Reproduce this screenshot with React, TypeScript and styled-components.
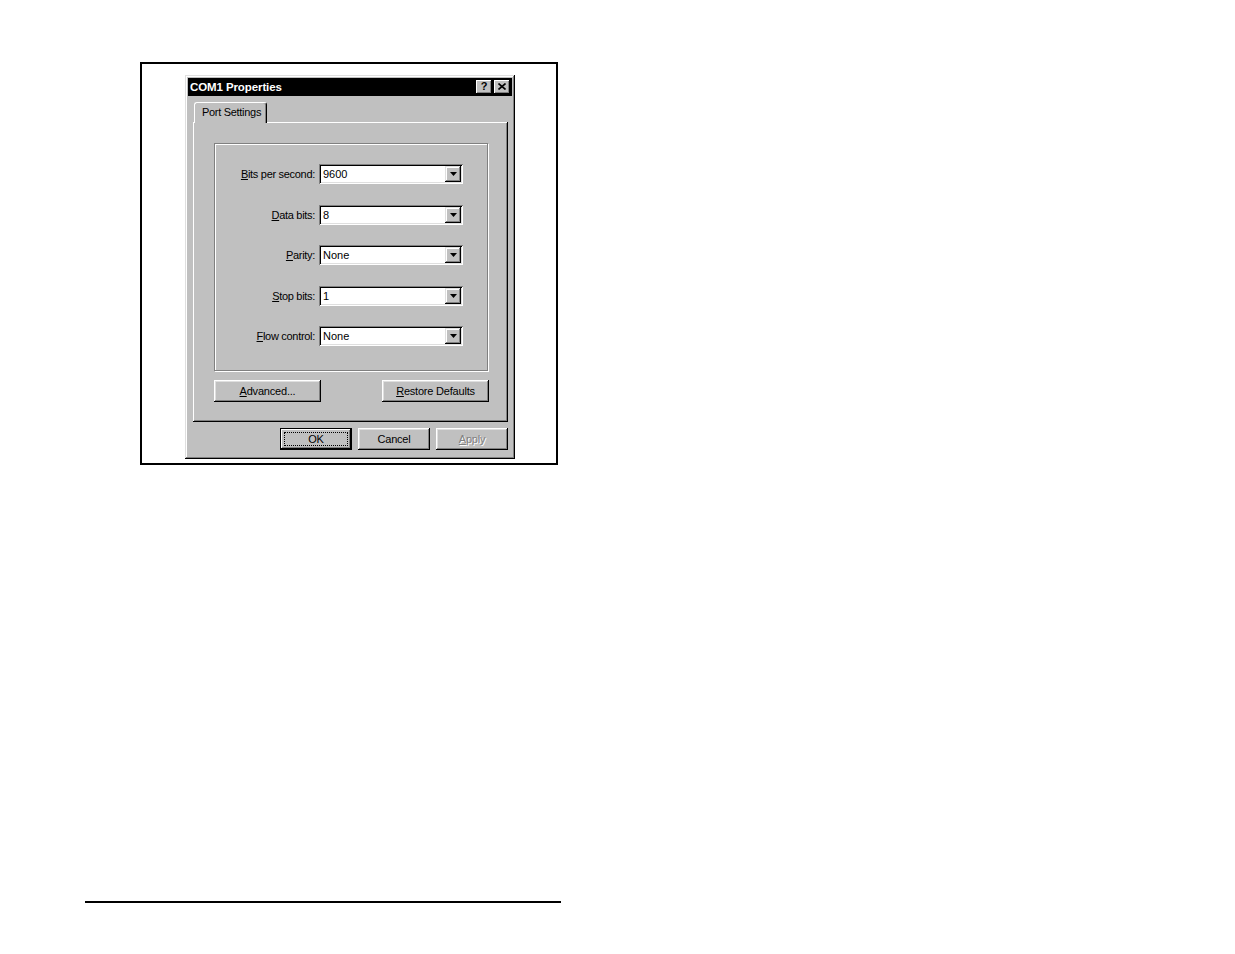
import React from "react";
import styled, { createGlobalStyle } from "styled-components";

const Global = createGlobalStyle`
  html, body { margin: 0; padding: 0; background: #fff; }
  body { font-family: "Liberation Sans", Arial, sans-serif; }
`;

const Page = styled.div`
  width: 1235px;
  height: 954px;
  padding-top: 62px;
  box-sizing: border-box;
  display: flex;
  flex-direction: column;
`;

const Frame = styled.div`
  margin-left: 140px;
  width: 418px;
  height: 403px;
  box-sizing: border-box;
  border: 2px solid #000;
  padding: 11px 0 0 43px;
`;

const Dialog = styled.div`
  width: 330px;
  height: 384px;
  box-sizing: border-box;
  background: #c0c0c0;
  padding: 3px;
  box-shadow: inset -1px -1px #000, inset 1px 1px #dfdfdf, inset -2px -2px #808080, inset 2px 2px #fff;
  display: flex;
  flex-direction: column;
  font-size: 11px;
  color: #000;
`;

const TitleBar = styled.div`
  height: 18px;
  background: #000;
  display: flex;
  align-items: center;
  justify-content: space-between;
  padding: 0 2px 1px 2px;
  box-sizing: border-box;
`;

const TitleText = styled.span`
  color: #fff;
  font-weight: bold;
  font-size: 11.5px;
  letter-spacing: -0.1px;
`;

const TitleButtons = styled.div`
  display: flex;
  gap: 2px;
`;

const CapButton = styled.div`
  width: 16px;
  height: 14px;
  background: #c0c0c0;
  box-shadow: inset -1px -1px #000, inset 1px 1px #fff, inset -2px -2px #808080;
  display: flex;
  align-items: center;
  justify-content: center;
  font-weight: bold;
  font-size: 11px;
  line-height: 1;
`;

const Body = styled.div`
  padding: 6px 4px 0 5px;
  display: flex;
  flex-direction: column;
`;

const TabStrip = styled.div`
  display: flex;
  height: 20px;
  align-items: flex-end;
  position: relative;
  z-index: 1;
`;

const Tab = styled.div`
  margin-left: 1px;
  height: 21px;
  box-sizing: border-box;
  padding: 3px 5px 0 7px;
  background: #c0c0c0;
  border-top: 1px solid #fff;
  border-left: 1px solid #fff;
  border-right: 1px solid #000;
  box-shadow: inset -1px 0 #808080;
  border-radius: 3px 3px 0 0;
  margin-bottom: -1px;
  letter-spacing: -0.3px;
`;

const Panel = styled.div`
  height: 300px;
  box-sizing: border-box;
  padding: 21px 20px 0 21px;
  box-shadow: inset -1px -1px #000, inset 1px 1px #fff, inset -2px -2px #808080;
  display: flex;
  flex-direction: column;
`;

const Group = styled.div`
  height: 228px;
  box-sizing: border-box;
  border: 1px solid #808080;
  box-shadow: inset 1px 1px #fff, 1px 1px #fff;
  padding: 20px 0 0 1px;
  display: grid;
  grid-template-columns: 99px 144px;
  column-gap: 4px;
  row-gap: 20.5px;
  align-content: start;
`;

const Label = styled.label`
  text-align: right;
  align-self: center;
  white-space: nowrap;
  letter-spacing: -0.3px;
`;

const U = styled.span`
  text-decoration: underline;
  text-underline-offset: 1px;
`;

const Combo = styled.div`
  height: 20px;
  box-sizing: border-box;
  background: #fff;
  box-shadow: inset 1px 1px #808080, inset -1px -1px #fff, inset 2px 2px #000, inset -2px -2px #dfdfdf;
  display: flex;
  align-items: center;
  padding: 2px;
`;

const ComboValue = styled.span`
  flex: 1;
  padding-left: 2px;
`;

const DropBtn = styled.div`
  width: 16px;
  height: 16px;
  box-sizing: border-box;
  background: #c0c0c0;
  box-shadow: inset -1px -1px #000, inset 1px 1px #dfdfdf, inset -2px -2px #808080, inset 2px 2px #fff;
  display: flex;
  align-items: center;
  justify-content: center;
`;

const ButtonRow = styled.div`
  display: flex;
  justify-content: space-between;
  margin-top: 9px;
  margin-right: -1px;
`;

const Button = styled.div<{ $w: number; $default?: boolean; $disabled?: boolean }>`
  width: ${(p) => p.$w}px;
  height: 22px;
  box-sizing: border-box;
  background: #c0c0c0;
  display: flex;
  align-items: center;
  justify-content: center;
  letter-spacing: -0.2px;
  position: relative;
  color: ${(p) => (p.$disabled ? "#808080" : "#000")};
  text-shadow: ${(p) => (p.$disabled ? "1px 1px #fff" : "none")};
  box-shadow: ${(p) =>
    p.$default
      ? "inset 0 0 0 1px #000, inset -2px -2px #000, inset 2px 2px #fff, inset -3px -3px #808080"
      : "inset -1px -1px #000, inset 1px 1px #fff, inset -2px -2px #808080, inset 2px 2px #dfdfdf"};
`;

const Focus = styled.span`
  position: absolute;
  inset: 4px;
  border: 1px dotted #000;
`;

const Footer = styled.div`
  display: flex;
  justify-content: flex-end;
  gap: 6px;
  margin-top: 6px;
`;

const Rule = styled.div`
  margin-top: 436px;
  margin-left: 85px;
  width: 476px;
  height: 2px;
  background: #000;
`;

const Arrow = () => (
  <svg width="7" height="4" viewBox="0 0 7 4">
    <path d="M0 0h7L3.5 4z" fill="#000" />
  </svg>
);

const rows: { u: string; post: string; value: string }[] = [
  { u: "B", post: "its per second:", value: "9600" },
  { u: "D", post: "ata bits:", value: "8" },
  { u: "P", post: "arity:", value: "None" },
  { u: "S", post: "top bits:", value: "1" },
  { u: "F", post: "low control:", value: "None" },
];

export default function App() {
  return (
    <>
      <Global />
      <Page>
        <Frame>
          <Dialog>
            <TitleBar>
              <TitleText>COM1 Properties</TitleText>
              <TitleButtons>
                <CapButton>?</CapButton>
                <CapButton>
                  <svg width="8" height="7" viewBox="0 0 8 7">
                    <path d="M0.5 0.5L7.5 6.5M7.5 0.5L0.5 6.5" stroke="#000" strokeWidth="1.6" />
                  </svg>
                </CapButton>
              </TitleButtons>
            </TitleBar>
            <Body>
              <TabStrip>
                <Tab>Port Settings</Tab>
              </TabStrip>
              <Panel>
                <Group>
                  {rows.map((r) => (
                    <React.Fragment key={r.post}>
                      <Label>
                        <U>{r.u}</U>
                        {r.post}
                      </Label>
                      <Combo>
                        <ComboValue>{r.value}</ComboValue>
                        <DropBtn>
                          <Arrow />
                        </DropBtn>
                      </Combo>
                    </React.Fragment>
                  ))}
                </Group>
                <ButtonRow>
                  <Button $w={107}>
                    <span>
                      <U>A</U>dvanced...
                    </span>
                  </Button>
                  <Button $w={107}>
                    <span>
                      <U>R</U>estore Defaults
                    </span>
                  </Button>
                </ButtonRow>
              </Panel>
              <Footer>
                <Button $w={72} $default>
                  <Focus />
                  OK
                </Button>
                <Button $w={72}>Cancel</Button>
                <Button $w={72} $disabled>
                  <span>
                    <U>A</U>pply
                  </span>
                </Button>
              </Footer>
            </Body>
          </Dialog>
        </Frame>
        <Rule />
      </Page>
    </>
  );
}
